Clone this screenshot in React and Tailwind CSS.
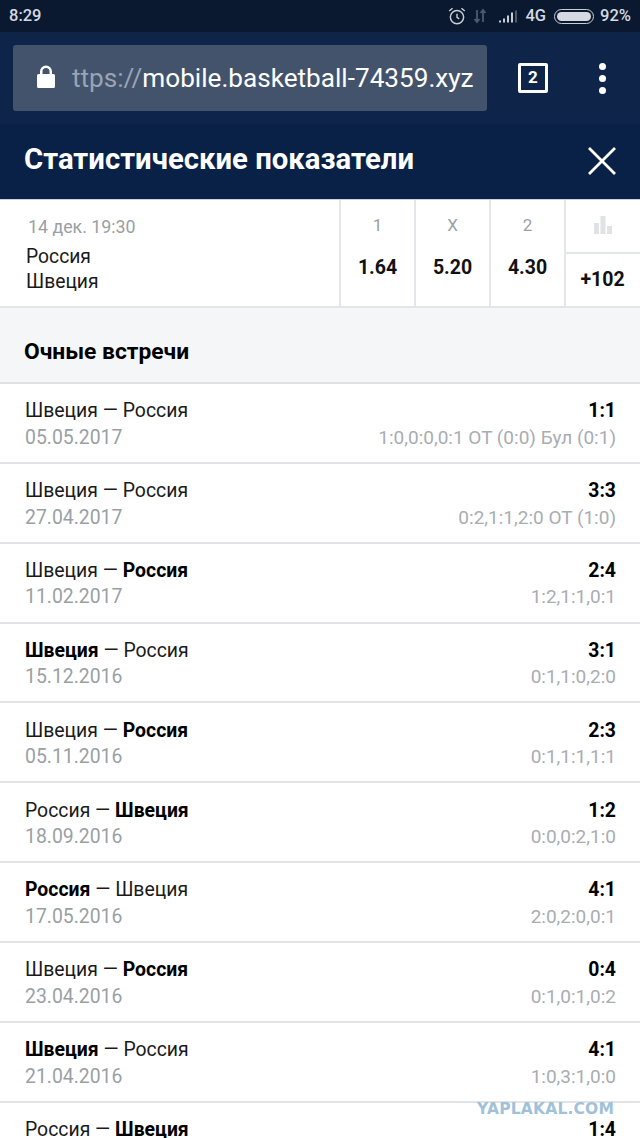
const matches = [
  { home: 'Швеция', away: 'Россия', date: '05.05.2017', score: '1:1', detail: '1:0,0:0,0:1 ОТ (0:0) Бул (0:1)' },
  { home: 'Швеция', away: 'Россия', date: '27.04.2017', score: '3:3', detail: '0:2,1:1,2:0 ОТ (1:0)' },
  { home: 'Швеция', away: 'Россия', win: 'away', date: '11.02.2017', score: '2:4', detail: '1:2,1:1,0:1' },
  { home: 'Швеция', away: 'Россия', win: 'home', date: '15.12.2016', score: '3:1', detail: '0:1,1:0,2:0' },
  { home: 'Швеция', away: 'Россия', win: 'away', date: '05.11.2016', score: '2:3', detail: '0:1,1:1,1:1' },
  { home: 'Россия', away: 'Швеция', win: 'away', date: '18.09.2016', score: '1:2', detail: '0:0,0:2,1:0' },
  { home: 'Россия', away: 'Швеция', win: 'home', date: '17.05.2016', score: '4:1', detail: '2:0,2:0,0:1' },
  { home: 'Швеция', away: 'Россия', win: 'away', date: '23.04.2016', score: '0:4', detail: '0:1,0:1,0:2' },
  { home: 'Швеция', away: 'Россия', win: 'home', date: '21.04.2016', score: '4:1', detail: '1:0,3:1,0:0' },
  { home: 'Россия', away: 'Швеция', win: 'away', date: '16.04.2016', score: '1:4', detail: '' },
];

const odds = [
  { label: '1', value: '1.64' },
  { label: 'X', value: '5.20' },
  { label: '2', value: '4.30' },
];

const StatusBar = () => (
  <div className="h-[32px] bg-[#0a1830] flex items-center justify-between pl-[9px] pr-[9px] text-[#d5d9e0] text-[16.500px] font-medium">
    <span>8:29</span>
    <div className="flex items-center">
      <svg width="20" height="20" viewBox="0 0 18 18" fill="none" stroke="#c9ced6" strokeWidth="1.3" className="mr-[6px]">
        <circle cx="9" cy="10" r="6" />
        <path d="M9 7v3.200l2 1.300M2 4.500 5 2M16 4.500 13 2" />
      </svg>
      <svg width="14" height="18" viewBox="0 0 14 16" fill="none" stroke="#4f5a6b" strokeWidth="1.8" className="mr-[11px]">
        <path d="M4 2v12M1.500 11 4 14l2.500-3M10 14V2M7.500 5 10 2l2.500 3" />
      </svg>
      <svg width="20" height="15" viewBox="0 0 20 14" fill="#c9ced6" className="mr-[7px]">
        <rect x="1" y="11" width="2" height="2" />
        <rect x="5" y="9" width="2" height="4" />
        <rect x="9" y="6" width="2" height="7" />
        <rect x="13" y="3" width="2" height="10" />
        <rect x="17" y="1" width="2" height="12" fill="#4f5a6b" />
      </svg>
      <span className="mr-[8px]">4G</span>
      <div className="w-[40px] h-[15px] rounded-full border border-[#c9ced6] p-[2px] mr-[5px]">
        <div className="w-full h-full rounded-full bg-[#d5d9e0]" />
      </div>
      <span className="pl-[1px]">92%</span>
    </div>
  </div>
);

const BrowserBar = () => (
  <div className="h-[92px] bg-[#0e2549] flex items-center pl-[13px]">
    <div className="w-[474px] h-[66px] rounded-[3px] bg-[#43536c] flex items-center pl-[24px] text-[26.150px] leading-none mb-[1px] whitespace-nowrap">
      <svg width="18" height="23" viewBox="0 0 18 23" fill="#ffffff" className="shrink-0 mr-[17px] mb-[2px]">
        <path d="M3 9V6.500a6 6 0 0 1 12 0V9h1.500A1.500 1.500 0 0 1 18 10.500v11a1.500 1.500 0 0 1-1.500 1.500h-15A1.500 1.500 0 0 1 0 21.500v-11A1.500 1.500 0 0 1 1.500 9H3Zm2.500 0h7V6.500a3.500 3.500 0 0 0-7 0V9Z" />
      </svg>
      <span className="text-[#9aa4b3] pt-[2px]">ttps://</span>
      <span className="text-white pt-[2px]">mobile.basketball-74359.xyz</span>
    </div>
    <div className="ml-[31px] w-[30px] h-[30px] border-[3px] border-white rounded-[2px] flex items-center justify-center text-white text-[17px] font-bold">
      2
    </div>
    <div className="ml-[51px] flex flex-col gap-[5px]">
      <div className="w-[7px] h-[7px] rounded-full bg-white" />
      <div className="w-[7px] h-[7px] rounded-full bg-white" />
      <div className="w-[7px] h-[7px] rounded-full bg-white" />
    </div>
  </div>
);

const MatchHeader = () => (
  <div className="h-[109px] bg-white flex border-t border-[#c9d3de] border-b-2 border-b-[#e3e5e8]">
    <div className="flex-1 pl-[26px] pt-[17px]">
      <div className="text-[#9a9fa6] text-[17.800px] leading-[20px] pl-[2px]">14 дек. 19:30</div>
      <div className="text-[#1a1a1a] text-[19.300px] leading-[25px] mt-[7px]">Россия</div>
      <div className="text-[#1a1a1a] text-[19.300px] leading-[25px]">Швеция</div>
    </div>
    {odds.map(o => (
      <div key={o.label} className="w-[75px] border-l-2 border-[#e3e6ea] flex flex-col items-center pt-[15px]">
        <div className="text-[#9a9fa6] text-[17px] leading-[20px]">{o.label}</div>
        <div className="text-[#111111] text-[19.500px] font-bold leading-[24px] mt-[21px]">{o.value}</div>
      </div>
    ))}
    <div className="w-[76px] border-l-2 border-[#e3e6ea] flex flex-col">
      <div className="h-[54px] border-b-2 border-[#e3e6ea] flex items-center justify-center pb-[2px] pr-[1px]">
        <svg width="18" height="18" viewBox="0 0 18 18" fill="#e0e2e5">
          <rect x="0" y="7" width="5" height="11" />
          <rect x="6.500" y="0" width="5" height="18" />
          <rect x="13" y="10" width="5" height="8" />
        </svg>
      </div>
      <div className="flex-1 flex items-center justify-center text-[#111111] text-[19.500px] font-bold pb-[1px] pr-[1px]">+102</div>
    </div>
  </div>
);

const Team = ({ name, bold }) => <span className={bold ? 'font-bold text-black' : ''}>{name}</span>;

const MatchRow = ({ m }) => (
  <div className="h-[79.850px] shrink-0 border-b-2 border-[#e1e3e7] bg-white flex justify-between pl-[25px] pr-[24px] pt-[14.300px]">
    <div>
      <div className="text-[#1a1a1a] text-[19.400px] leading-[25px]">
        <Team name={m.home} bold={m.win === 'home'} /> — <Team name={m.away} bold={m.win === 'away'} />
      </div>
      <div className="text-[#9a9fa6] text-[19.400px] leading-[25px] mt-[1.500px]">{m.date}</div>
    </div>
    <div className="text-right">
      <div className="text-black text-[19.400px] font-bold leading-[25px]">{m.score}</div>
      <div className="text-[#a9adb3] text-[19px] leading-[25px] mt-[1.500px]">{m.detail}</div>
    </div>
  </div>
);

const App = () => {
  return (
    <div className="relative w-[640px] h-[1138px] overflow-hidden bg-white font-['Roboto',sans-serif]">
      <StatusBar />
      <BrowserBar />
      <div className="h-[75px] bg-[#0a2147] flex items-center justify-between pl-[24px] pr-[24px] pb-[3px]">
        <h1 className="text-white text-[29.300px] font-bold">Статистические показатели</h1>
        <svg width="28" height="28" viewBox="0 0 28 28" fill="none" stroke="#ffffff" strokeWidth="2.800" className="mt-[1px]">
          <path d="M1 1l26 26M27 1 1 27" />
        </svg>
      </div>
      <MatchHeader />
      <div className="h-[76px] bg-[#f5f6f7] border-b-2 border-[#dfe1e5] flex items-center pl-[24px] pt-[15px]">
        <h2 className="text-black text-[22.800px] font-bold">Очные встречи</h2>
      </div>
      <div className="flex flex-col">
        {matches.map((m, idx) => <MatchRow key={idx} m={m} />)}
      </div>
      <div className="absolute left-[477px] top-[1101px] text-[#9fc2d9] text-[15.500px] font-black font-['DejaVu_Sans',sans-serif] leading-[16px] tracking-[0.2px]">
        YAPLAKAL.COM
      </div>
    </div>
  );
};

export default App;
